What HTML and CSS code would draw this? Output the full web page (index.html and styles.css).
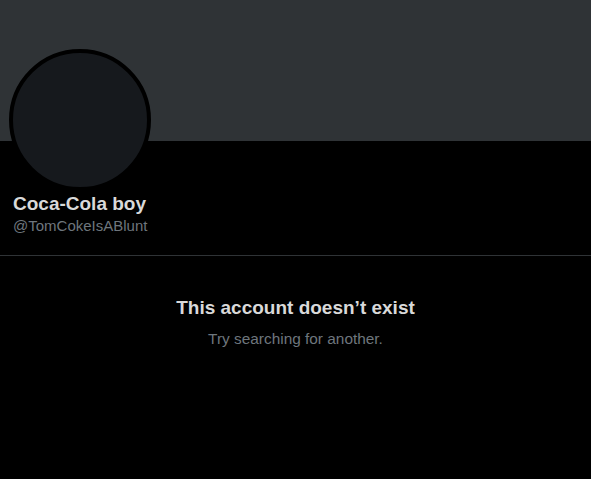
FILE: index.html
```html
<!DOCTYPE html>
<html>
<head>
<meta charset="utf-8">
<link rel="stylesheet" href="styles.css">
</head>
<body>
<div class="page">
  <div class="banner"></div>
  <div class="profile">
    <div class="avatar"></div>
    <div class="name">Coca-Cola boy</div>
    <div class="handle">@TomCokeIsABlunt</div>
  </div>
  <div class="empty">
    <div class="title">This account doesn’t exist</div>
    <div class="sub">Try searching for another.</div>
  </div>
</div>
</body>
</html>
```
FILE: styles.css
```css
html, body {
  margin: 0;
  padding: 0;
  background: #000;
}
body {
  font-family: "Liberation Sans", Arial, sans-serif;
  width: 591px;
  height: 479px;
  overflow: hidden;
}
.banner {
  height: 141px;
  background: #2f3336;
}
.profile {
  padding: 0 13px 19px;
  border-bottom: 1px solid #2f3336;
}
.avatar {
  width: 134px;
  height: 134px;
  margin: -92px 0 0 -4px;
  border: 4px solid #000;
  border-radius: 50%;
  background: #16191d;
}
.name {
  margin-top: 1px;
  font-size: 19px;
  line-height: 24px;
  font-weight: bold;
  color: #d9d9d9;
}
.handle {
  font-size: 15px;
  line-height: 20px;
  color: #6e767d;
}
.empty {
  padding-top: 40px;
  text-align: center;
}
.title {
  font-size: 19px;
  line-height: 24px;
  font-weight: bold;
  color: #d9d9d9;
}
.sub {
  margin-top: 9px;
  font-size: 15.4px;
  line-height: 20px;
  color: #6e767d;
}
```
